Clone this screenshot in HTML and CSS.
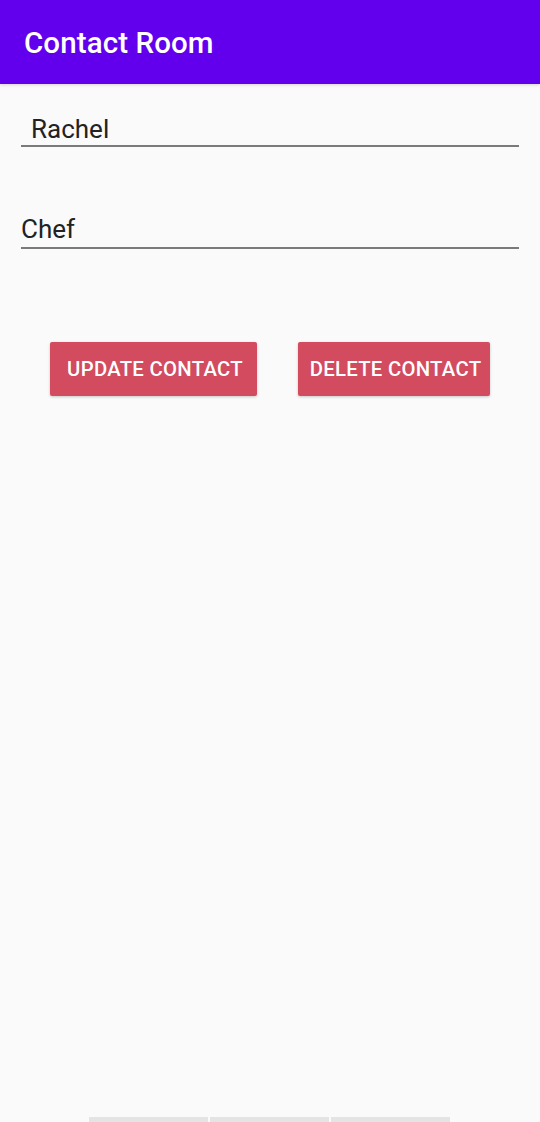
FILE: index.html
```html
<!DOCTYPE html>
<html>
<head>
<meta charset="utf-8">
<link rel="stylesheet" href="styles.css">
</head>
<body>
<div class="screen">
  <header class="appbar"><h1 class="title">Contact Room</h1></header>
  <main class="content">
    <div class="field field-name"><span class="value">Rachel</span></div>
    <div class="field field-job"><span class="value">Chef</span></div>
    <div class="actions">
      <button class="btn btn-update">Update Contact</button>
      <button class="btn btn-delete">Delete Contact</button>
    </div>
  </main>
  <div class="bottom-bar">
    <span class="seg"></span><span class="seg"></span><span class="seg"></span>
  </div>
</div>
</body>
</html>
```
FILE: styles.css
```css
html, body {
  margin: 0;
  padding: 0;
  background: #fafafa;
}
.screen {
  width: 540px;
  height: 1122px;
  display: flex;
  flex-direction: column;
  font-family: Roboto, "Noto Sans", sans-serif;
  overflow: hidden;
}
.appbar {
  height: 84px;
  background: #6200ee;
  display: flex;
  align-items: center;
  padding-left: 24px;
  box-shadow: 0 1px 3px rgba(0,0,0,0.15);
}
.title {
  margin: 0;
  color: #ffffff;
  font-size: 29.5px;
  font-weight: 500;
  letter-spacing: 0.1px;
  padding-top: 2px;
}
.content {
  flex: 1;
  padding: 0 21px;
  display: flex;
  flex-direction: column;
}
.field {
  border-bottom: 2px solid #7a7a7a;
  color: #222222;
  font-size: 26px;
  line-height: 30px;
  display: flex;
}
.field-name {
  margin-top: 30px;
  padding-left: 10px;
  height: 31px;
}
.field-job {
  margin-top: 70px;
  height: 30px;
  line-height: 25px;
}
.actions {
  margin-top: 93px;
  display: flex;
  padding-left: 29px;
  gap: 41px;
}
.btn {
  height: 54px;
  border: none;
  border-radius: 2px;
  background: #d24b5e;
  color: #ffffff;
  font-family: Roboto, "Noto Sans", sans-serif;
  font-size: 20.3px;
  font-weight: 500;
  text-transform: uppercase;
  letter-spacing: 0.3px;
  box-shadow: 0 1px 3px rgba(0,0,0,0.2);
  padding: 0 0 0 3px;
}
.btn-update { width: 207px; }
.btn-delete { width: 192px; }
.bottom-bar {
  height: 5px;
  display: flex;
  gap: 2px;
  padding-left: 89px;
}
.seg {
  width: 119px;
  background: #e4e4e4;
}
```
